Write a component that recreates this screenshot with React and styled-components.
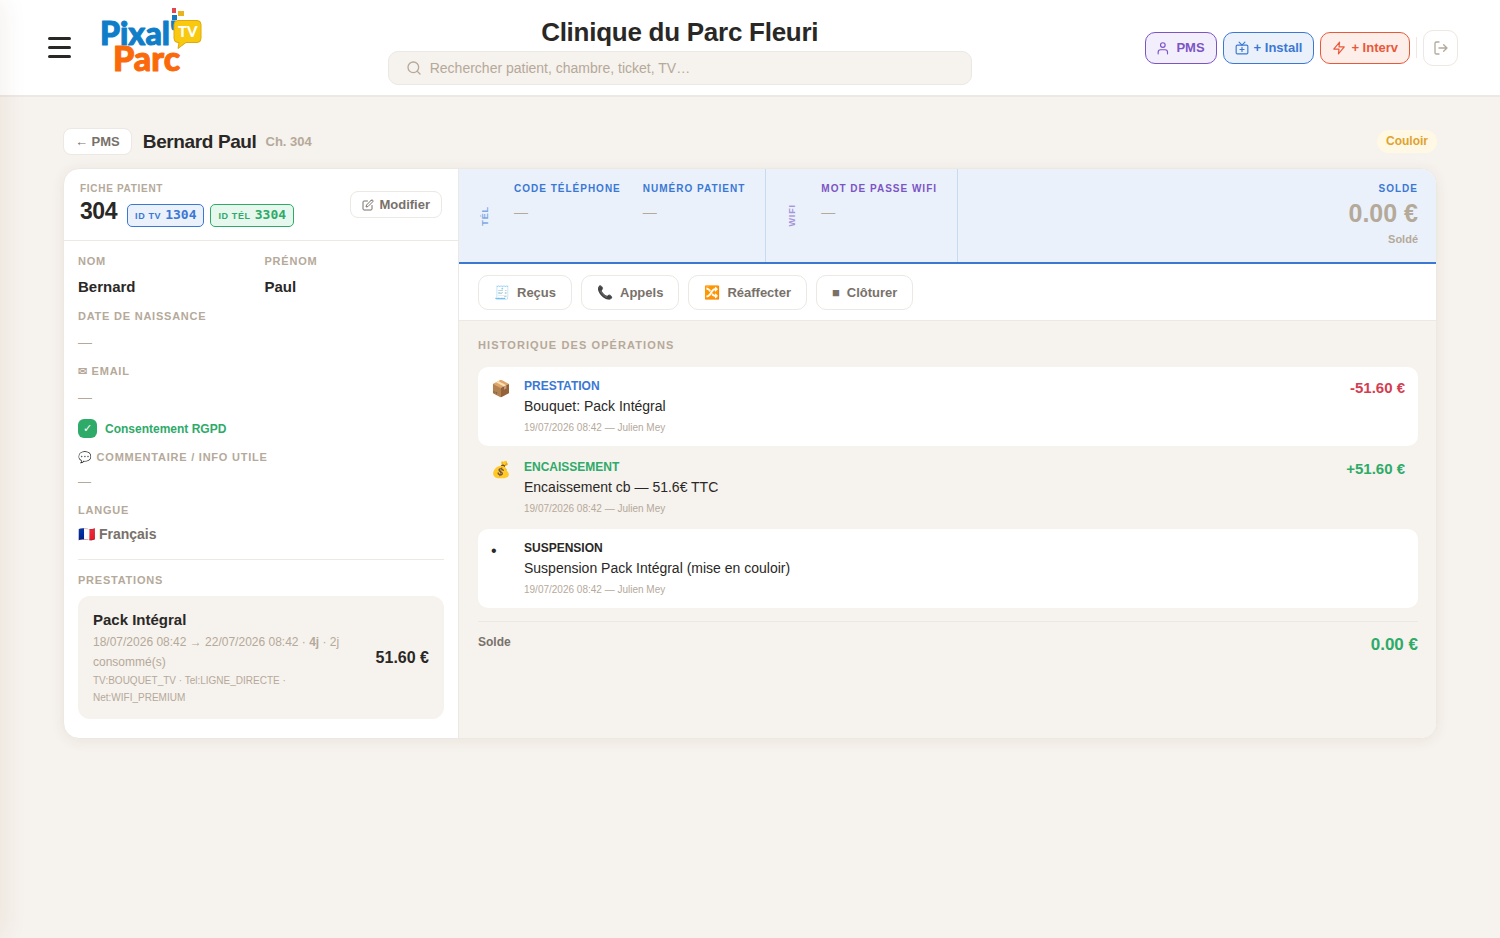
import React from 'react';
import styled, { createGlobalStyle, css } from 'styled-components';

const c = {
  ink: '#2a2826',
  soft: '#78716a',
  muted: '#b5a99a',
  line: '#ece8e3',
  sand: '#f6f2ed',
  blue: '#3b78d4',
  blueBg: '#eaf1fb',
  green: '#2eaa69',
  greenBg: '#e6f7ee',
  violet: '#7c55c4',
  violetBg: '#f3eefc',
  coral: '#e8593a',
  coralBg: '#fdeeea',
  red: '#d43d51',
};

const Global = createGlobalStyle`
  *, *::before, *::after { box-sizing: border-box; }
  body {
    margin: 0;
    min-height: 100vh;
    background: ${c.sand};
    color: ${c.ink};
    font-family: "Liberation Sans", Arial, sans-serif;
    font-size: 14px;
    overflow-x: hidden;
  }
  button, input { font: inherit; }
  h1, h2, p, dl, dd, ul { margin: 0; padding: 0; }
`;

const Drawer = styled.aside`
  position: fixed;
  top: 0;
  left: -280px;
  width: 280px;
  height: 100vh;
  background: #fff;
  box-shadow: 4px 0 24px rgba(120, 50, 20, 0.07);
  z-index: 10;
  pointer-events: none;
`;

const Header = styled.header`
  display: flex;
  align-items: center;
  height: 97px;
  padding: 0 42px 0 40px;
  background: #fff;
  border-bottom: 2px solid ${c.line};
`;

const BrandArea = styled.div`
  display: flex;
  align-items: center;
  align-self: stretch;
  gap: 20px;
  width: 174px;
`;

const Burger = styled.button`
  display: flex;
  flex-direction: column;
  gap: 6px;
  width: 39px;
  padding: 8px;
  border: 0;
  background: none;
  cursor: pointer;
`;

const BurgerBar = styled.span`
  height: 3px;
  border-radius: 2px;
  background: ${c.ink};
`;

const LogoLink = styled.a`
  display: block;
  height: 80px;
  align-self: flex-start;
`;

const Center = styled.div`
  flex: 1;
  display: flex;
  flex-direction: column;
  align-items: center;
  gap: 4px;
  padding-top: 7px;
`;

const ClinicName = styled.h1`
  font-size: 26px;
  line-height: 30px;
  letter-spacing: -0.01em;
`;

const Search = styled.label`
  display: flex;
  align-items: center;
  gap: 8px;
  width: 100%;
  max-width: 584px;
  height: 34px;
  padding: 0 17px;
  border: 1px solid ${c.line};
  border-radius: 10px;
  background: ${c.sand};
  color: ${c.muted};
`;

const SearchInput = styled.input`
  flex: 1;
  border: 0;
  outline: 0;
  padding: 0;
  background: none;
  color: ${c.ink};
  font-size: 14px;
  &::placeholder { color: ${c.muted}; opacity: 1; }
`;

const Actions = styled.nav`
  display: flex;
  align-items: center;
  gap: 6px;
`;

const tones = {
  violet: css`color: ${c.violet}; background: ${c.violetBg};`,
  blue: css`color: ${c.blue}; background: ${c.blueBg};`,
  coral: css`color: ${c.coral}; background: ${c.coralBg};`,
};

const QuickButton = styled.button`
  display: inline-flex;
  align-items: center;
  gap: 5px;
  height: 32px;
  padding: 0 11px;
  border: 1px solid currentColor;
  border-radius: 10px;
  font-size: 13px;
  font-weight: 700;
  white-space: nowrap;
  cursor: pointer;
  ${(p) => tones[p.$tone]}
`;

const Separator = styled.span`
  width: 1px;
  height: 21px;
  background: ${c.line};
`;

const ExitButton = styled.button`
  display: grid;
  place-items: center;
  width: 35px;
  height: 36px;
  padding: 0;
  border: 1px solid ${c.line};
  border-radius: 10px;
  background: #fff;
  color: ${c.muted};
  cursor: pointer;
`;

const Main = styled.main`
  padding: 31px 63px;
`;

const Crumbs = styled.div`
  display: flex;
  align-items: center;
  height: 27px;
  margin-bottom: 13px;
`;

const SmallButton = styled.button`
  display: inline-flex;
  align-items: center;
  gap: 5px;
  height: 27px;
  padding: 0 11px;
  border: 1px solid ${c.line};
  border-radius: 8px;
  background: #fff;
  color: ${c.soft};
  font-size: 13px;
  font-weight: 700;
  cursor: pointer;
`;

const PatientName = styled.h2`
  margin-left: 11px;
  font-size: 19px;
  letter-spacing: -0.02em;
`;

const RoomNote = styled.span`
  margin-left: 9px;
  color: ${c.muted};
  font-size: 13px;
  font-weight: 700;
`;

const StatusPill = styled.span`
  margin-left: auto;
  padding: 0 9px;
  border-radius: 12px;
  background: #fef8e4;
  color: #dfa32f;
  font-size: 12px;
  font-weight: 700;
  line-height: 23px;
`;

const Sheet = styled.section`
  display: flex;
  border: 1px solid ${c.line};
  border-radius: 16px;
  overflow: hidden;
  background: #fff;
  box-shadow: 0 2px 14px rgba(90, 60, 30, 0.07);
`;

const Profile = styled.div`
  flex: 0 0 395px;
  border-right: 1px solid ${c.line};
`;

const ProfileHead = styled.div`
  display: flex;
  align-items: center;
  justify-content: space-between;
  height: 72px;
  padding: 0 16px;
  border-bottom: 1px solid ${c.line};
`;

const IdLine = styled.div`
  display: flex;
  align-items: flex-start;
  gap: 6px;
  margin-top: 1px;
`;

const Room = styled.strong`
  margin-right: 4px;
  font-size: 23px;
  line-height: 28px;
  letter-spacing: -0.02em;
`;

const IdTag = styled.span`
  display: inline-flex;
  align-items: baseline;
  gap: 4px;
  height: 23px;
  margin-top: 7px;
  padding: 0 7px;
  border: 1px solid currentColor;
  border-radius: 5px;
  color: ${(p) => (p.$green ? c.green : c.blue)};
  background: ${(p) => (p.$green ? c.greenBg : c.blueBg)};
  font-size: 9px;
  font-weight: 700;
  line-height: 20px;
  letter-spacing: 0.07em;
`;

const IdNumber = styled.b`
  font-family: "DejaVu Sans Mono", monospace;
  font-size: 13px;
  letter-spacing: 0;
`;

const Caption = styled.div`
  color: ${(p) => p.$color || c.muted};
  font-size: ${(p) => (p.$small ? '10px' : '11px')};
  font-weight: 700;
  line-height: 14px;
  letter-spacing: ${(p) => (p.$wide ? '0.1em' : '0.07em')};
  text-transform: uppercase;
  white-space: nowrap;
`;

const ProfileBody = styled.div`
  display: flex;
  flex-direction: column;
  gap: 12px;
  padding: 13px 14px 19px;
`;

const Pair = styled.div`
  display: grid;
  grid-template-columns: 1fr 1fr;
  gap: 7px;
`;

const Field = styled.div`
  display: flex;
  flex-direction: column;
  gap: ${(p) => (p.$tight ? '7px' : '9px')};
`;

const Value = styled.div`
  color: ${(p) => p.$color || c.ink};
  font-size: ${(p) => p.$size || 15}px;
  font-weight: ${(p) => (p.$plain ? 400 : 700)};
  line-height: ${(p) => (p.$size === 13 ? 18 : 20)}px;
`;

const Consent = styled.label`
  display: flex;
  align-items: center;
  gap: 8px;
  height: 19px;
  color: ${c.green};
  font-size: 12px;
  font-weight: 700;
`;

const Tick = styled.input`
  appearance: none;
  display: grid;
  place-items: center;
  width: 19px;
  height: 19px;
  margin: 0;
  border-radius: 6px;
  background: ${c.green};
  &::after {
    content: "✓";
    color: #fff;
    font-size: 11px;
    font-weight: 400;
    line-height: 19px;
  }
`;

const Services = styled.div`
  display: flex;
  flex-direction: column;
  gap: 9px;
  margin-top: 3px;
  padding-top: 13px;
  border-top: 1px solid ${c.line};
`;

const ServiceCard = styled.article`
  display: flex;
  align-items: center;
  justify-content: space-between;
  gap: 16px;
  padding: 14px 15px 13px;
  border-radius: 12px;
  background: ${c.sand};
`;

const ServiceText = styled.div`
  color: ${c.muted};
  font-size: 12px;
  line-height: 20px;
`;

const ServiceName = styled.div`
  margin-bottom: 3px;
  color: ${c.ink};
  font-size: 15px;
  font-weight: 700;
  line-height: 19px;
`;

const ServiceCodes = styled.div`
  font-size: 10px;
  line-height: 17px;
`;

const Price = styled.strong`
  font-size: ${(p) => p.$size || 16}px;
  line-height: 22px;
  color: ${(p) => p.$color || c.ink};
  white-space: nowrap;
`;

const Account = styled.div`
  flex: 1;
  display: flex;
  flex-direction: column;
  min-width: 0;
  background: ${c.sand};
`;

const AccessBar = styled.div`
  display: flex;
  height: 95px;
  background: ${c.blueBg};
  border-bottom: 2px solid ${c.blue};
`;

const AccessGroup = styled.div`
  display: flex;
  gap: 22px;
  padding: 12px 20px;
  border-right: 1px solid #c6daf4;
`;

const AccessField = styled.div`
  display: flex;
  flex-direction: column;
  gap: 6px;
  padding-top: 1px;
`;

const SideLabel = styled.div`
  align-self: center;
  width: 13px;
  writing-mode: vertical-rl;
  transform: rotate(180deg);
  color: ${(p) => p.$color};
  opacity: 0.6;
  font-size: 9px;
  font-weight: 700;
  line-height: 13px;
  letter-spacing: 0.1em;
`;

const Balance = styled.div`
  margin-left: auto;
  padding: 13px 18px 0;
  text-align: right;
`;

const BalanceAmount = styled.div`
  margin: 2px 0 3px;
  color: ${c.muted};
  font-size: 25px;
  font-weight: 700;
  line-height: 30px;
`;

const BalanceState = styled.div`
  color: ${c.muted};
  font-size: 11px;
  font-weight: 700;
  line-height: 16px;
`;

const Tools = styled.div`
  display: flex;
  align-items: center;
  gap: 9px;
  height: 57px;
  padding: 0 19px;
  background: #fff;
  border-bottom: 1px solid ${c.line};
`;

const ToolButton = styled.button`
  display: inline-flex;
  align-items: center;
  gap: 7px;
  height: 35px;
  padding: 0 15px;
  border: 1px solid ${c.line};
  border-radius: 10px;
  background: #fff;
  color: ${c.soft};
  font-size: 13px;
  font-weight: 700;
  cursor: pointer;
`;

const History = styled.div`
  padding: 17px 18px 20px 19px;
`;

const Operations = styled.ul`
  display: flex;
  flex-direction: column;
  gap: 2px;
  margin-top: 15px;
  list-style: none;
`;

const Operation = styled.li`
  display: flex;
  gap: 10px;
  padding: 10px 13px;
  border-radius: 10px;
  &:nth-child(odd) { background: #fff; }
`;

const OperationIcon = styled.span`
  width: 23px;
  font-size: 16px;
  line-height: 24px;
`;

const OperationText = styled.div`
  flex: 1;
`;

const OperationType = styled.div`
  color: ${(p) => p.$color || c.ink};
  font-size: 12px;
  font-weight: 700;
  line-height: 18px;
`;

const OperationLabel = styled.div`
  margin: 1px 0 3px;
  line-height: 20px;
`;

const OperationMeta = styled.div`
  color: ${c.muted};
  font-size: 10px;
  line-height: 17px;
`;

const Total = styled.div`
  display: flex;
  justify-content: space-between;
  margin-top: 13px;
  padding-top: 12px;
  border-top: 1px solid ${c.line};
`;

const TotalLabel = styled.span`
  color: ${c.soft};
  font-size: 12px;
  font-weight: 700;
  line-height: 16px;
`;

const Icon = ({ size = 14, width = 2, box = '0 0 24 24', children }) => (
  <svg width={size} height={size} viewBox={box} fill="none" stroke="currentColor"
    strokeWidth={width} strokeLinecap="round" strokeLinejoin="round" aria-hidden="true">
    {children}
  </svg>
);

const Logo = () => (
  <svg width="104" height="80" viewBox="0 0 104 80" role="img" aria-label="Pixal'TV Parc">
    <g fontFamily="Lato, sans-serif" fontWeight="900" strokeLinejoin="round">
      <text x="1" y="45" fontSize="32" fill="#0f7dc8" stroke="#0f7dc8" strokeWidth="1">Pixal'</text>
      <text x="14" y="71" fontSize="34" fill="#fb6a0a" stroke="#fb6a0a" strokeWidth="1">Parc</text>
    </g>
    <rect x="73" y="8" width="4" height="5" fill="#e2474f" />
    <rect x="79" y="11" width="6" height="5" fill="#e8b31c" />
    <rect x="73" y="15" width="5" height="5" fill="#1a78bd" />
    <path d="M79 20.500h19a4 4 0 0 1 4 4v14a4 4 0 0 1-4 4H87l-8 6 1-6h-1a4 4 0 0 1-4-4V24.500a4 4 0 0 1 4-4z" fill="#f8c90e" stroke="#e0a80c" />
    <text x="79" y="37" fontSize="15" fontFamily="Lato, sans-serif" fontWeight="900" fill="#fff">TV</text>
  </svg>
);

const operations = [
  { icon: '📦', type: 'PRESTATION', color: c.blue, label: 'Bouquet: Pack Intégral', amount: '-51.60 €', amountColor: c.red },
  { icon: '💰', type: 'ENCAISSEMENT', color: c.green, label: 'Encaissement cb — 51.6€ TTC', amount: '+51.60 €', amountColor: c.green },
  { icon: '•', type: 'SUSPENSION', label: 'Suspension Pack Intégral (mise en couloir)' },
];

const tools = [['🧾', 'Reçus'], ['📞', 'Appels'], ['🔀', 'Réaffecter'], ['■', 'Clôturer']];

export default function App() {
  return (
    <>
      <Global />
      <Drawer aria-hidden="true" />
      <Header>
        <BrandArea>
          <Burger aria-label="Menu"><BurgerBar /><BurgerBar /><BurgerBar /></Burger>
          <LogoLink href="#"><Logo /></LogoLink>
        </BrandArea>
        <Center>
          <ClinicName>Clinique du Parc Fleuri</ClinicName>
          <Search>
            <Icon size={16}><circle cx="11" cy="11" r="8" /><path d="m21 21-4.300-4.300" /></Icon>
            <SearchInput type="text" aria-label="Rechercher" placeholder="Rechercher patient, chambre, ticket, TV…" />
          </Search>
        </Center>
        <Actions>
          <QuickButton $tone="violet">
            <Icon><circle cx="10" cy="7" r="4" /><path d="M2 22v-3a4 4 0 0 1 4-4h8a4 4 0 0 1 4 4v3" /></Icon>
            PMS
          </QuickButton>
          <QuickButton $tone="blue">
            <Icon><rect x="2" y="7" width="20" height="15" rx="2" /><path d="m17 2-5 5-5-5M12 11v7M8.500 14.500h7" /></Icon>
            + Install
          </QuickButton>
          <QuickButton $tone="coral">
            <Icon><path d="M13 2 3 14h9l-1 8 10-12h-9l1-8z" /></Icon>
            + Interv
          </QuickButton>
          <Separator />
          <ExitButton aria-label="Déconnexion">
            <Icon size={16}><path d="M9 21H5a2 2 0 0 1-2-2V5a2 2 0 0 1 2-2h4M16 17l5-5-5-5M21 12H9" /></Icon>
          </ExitButton>
        </Actions>
      </Header>

      <Main>
        <Crumbs>
          <SmallButton>← PMS</SmallButton>
          <PatientName>Bernard Paul</PatientName>
          <RoomNote>Ch. 304</RoomNote>
          <StatusPill>Couloir</StatusPill>
        </Crumbs>

        <Sheet>
          <Profile>
            <ProfileHead>
              <div>
                <Caption $small>Fiche patient</Caption>
                <IdLine>
                  <Room>304</Room>
                  <IdTag>ID TV <IdNumber>1304</IdNumber></IdTag>
                  <IdTag $green>ID TÉL <IdNumber>3304</IdNumber></IdTag>
                </IdLine>
              </div>
              <SmallButton>
                <Icon size={12}>
                  <path d="M11 4H4a2 2 0 0 0-2 2v14a2 2 0 0 0 2 2h14a2 2 0 0 0 2-2v-7" />
                  <path d="M18.500 2.500a2.100 2.100 0 0 1 3 3L12 15l-4 1 1-4 9.500-9.500z" />
                </Icon>
                Modifier
              </SmallButton>
            </ProfileHead>
            <ProfileBody>
              <Pair>
                <Field><Caption>Nom</Caption><Value>Bernard</Value></Field>
                <Field><Caption>Prénom</Caption><Value>Paul</Value></Field>
              </Pair>
              <Field><Caption>Date de naissance</Caption><Value $size={14} $plain $color={c.muted}>—</Value></Field>
              <Field><Caption>✉ Email</Caption><Value $size={14} $plain $color={c.muted}>—</Value></Field>
              <Consent><Tick type="checkbox" defaultChecked />Consentement RGPD</Consent>
              <Field><Caption>💬 Commentaire / info utile</Caption><Value $size={13} $plain $color={c.muted}>—</Value></Field>
              <Field $tight><Caption>Langue</Caption><Value $size={14} $color={c.soft}>🇫🇷 Français</Value></Field>
              <Services>
                <Caption>Prestations</Caption>
                <ServiceCard>
                  <ServiceText>
                    <ServiceName>Pack Intégral</ServiceName>
                    18/07/2026 08:42 → 22/07/2026 08:42 · <b>4j</b> · 2j consommé(s)
                    <ServiceCodes>TV:BOUQUET_TV · Tel:LIGNE_DIRECTE · Net:WIFI_PREMIUM</ServiceCodes>
                  </ServiceText>
                  <Price>51.60 €</Price>
                </ServiceCard>
              </Services>
            </ProfileBody>
          </Profile>

          <Account>
            <AccessBar>
              <AccessGroup>
                <SideLabel $color={c.blue}>TÉL</SideLabel>
                <AccessField><Caption $small $wide $color={c.blue}>Code téléphone</Caption><Value $size={14} $plain $color={c.muted}>—</Value></AccessField>
                <AccessField><Caption $small $wide $color={c.blue}>Numéro patient</Caption><Value $size={14} $plain $color={c.muted}>—</Value></AccessField>
              </AccessGroup>
              <AccessGroup>
                <SideLabel $color={c.violet}>WIFI</SideLabel>
                <AccessField><Caption $small $wide $color={c.violet}>Mot de passe wifi</Caption><Value $size={14} $plain $color={c.muted}>—</Value></AccessField>
              </AccessGroup>
              <Balance>
                <Caption $small $wide $color={c.blue}>Solde</Caption>
                <BalanceAmount>0.00 €</BalanceAmount>
                <BalanceState>Soldé</BalanceState>
              </Balance>
            </AccessBar>
            <Tools>
              {tools.map(([icon, label]) => (
                <ToolButton key={label}><span>{icon}</span>{label}</ToolButton>
              ))}
            </Tools>
            <History>
              <Caption $wide>Historique des opérations</Caption>
              <Operations>
                {operations.map((op) => (
                  <Operation key={op.type}>
                    <OperationIcon>{op.icon}</OperationIcon>
                    <OperationText>
                      <OperationType $color={op.color}>{op.type}</OperationType>
                      <OperationLabel>{op.label}</OperationLabel>
                      <OperationMeta>19/07/2026 08:42 — Julien Mey</OperationMeta>
                    </OperationText>
                    {op.amount && <Price $size={15} $color={op.amountColor}>{op.amount}</Price>}
                  </Operation>
                ))}
              </Operations>
              <Total>
                <TotalLabel>Solde</TotalLabel>
                <Price $size={17} $color={c.green}>0.00 €</Price>
              </Total>
            </History>
          </Account>
        </Sheet>
      </Main>
    </>
  );
}
